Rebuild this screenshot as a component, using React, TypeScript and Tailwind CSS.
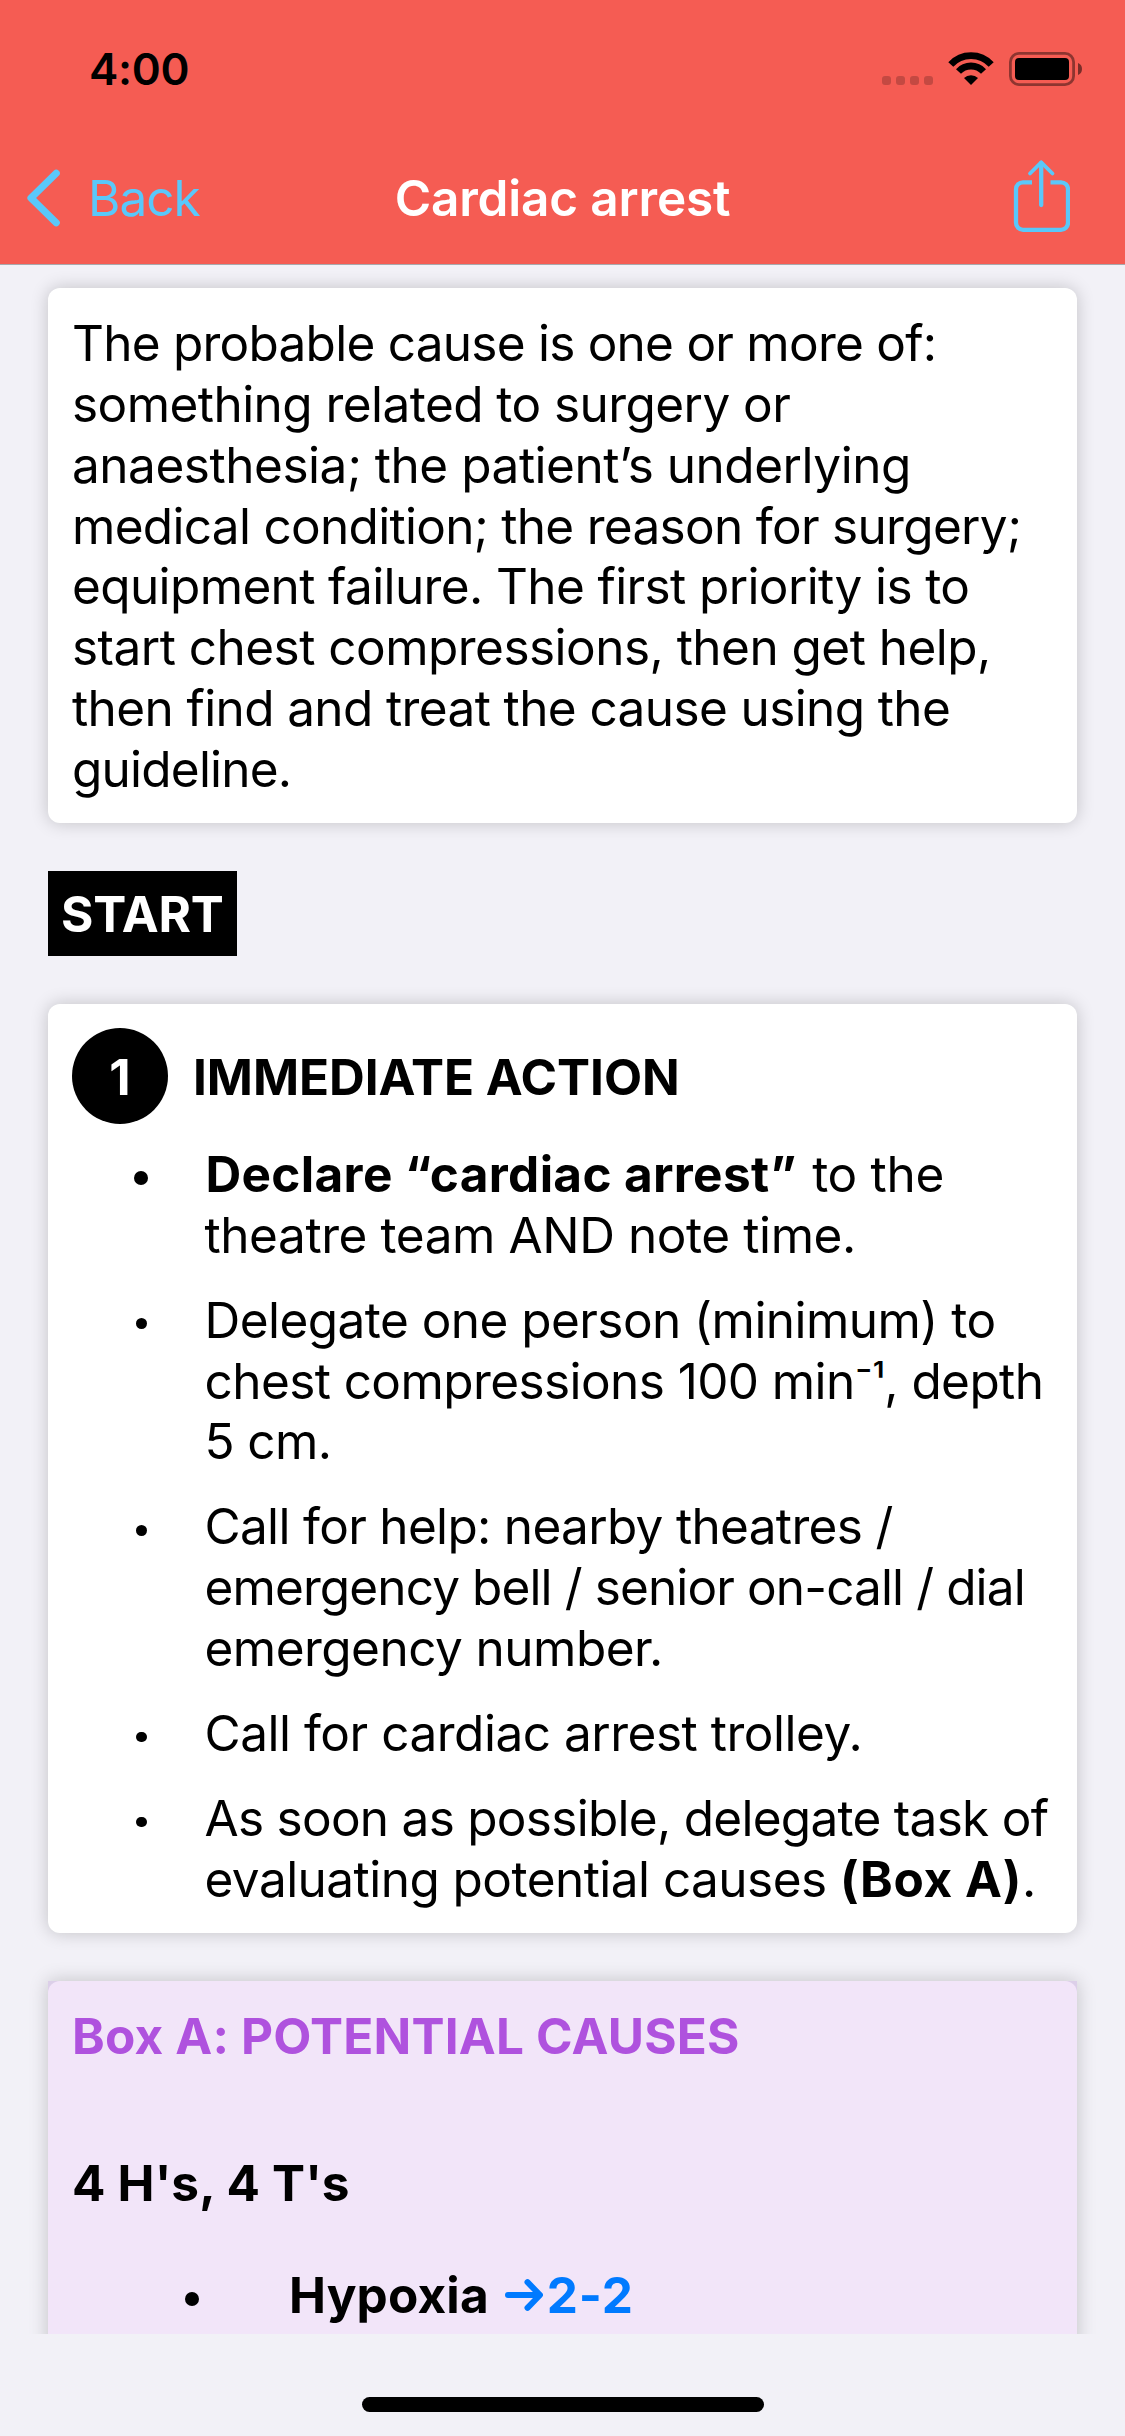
import type { ReactNode } from "react";

function WifiIcon() {
  return (
    <svg width="46" height="34" viewBox="0 0 46 34" fill="none">
      <path d="M2.8 12.5A27.4 27.4 0 0 1 43.2 12.5" stroke="#000" strokeWidth="6.8" />
      <path d="M10.5 19.5A17 17 0 0 1 35.5 19.5" stroke="#000" strokeWidth="6.8" />
      <path d="M23 33L16 26A10 10 0 0 1 30 26Z" fill="#000" />
    </svg>
  );
}

function BatteryIcon() {
  return (
    <svg width="74" height="34" viewBox="0 0 74 34" fill="none">
      <rect x="1.4" y="1.4" width="63.2" height="31.2" rx="8.6" stroke="#000" strokeOpacity="0.42" strokeWidth="2.8" />
      <rect x="6" y="6" width="54" height="22" rx="4" fill="#000" />
      <path d="M69 11C71.6 12 73 14.3 73 17C73 19.7 71.6 22 69 23Z" fill="#000" fillOpacity="0.5" />
    </svg>
  );
}

function ShareIcon() {
  return (
    <svg width="58" height="76" viewBox="0 0 58 76" fill="none" stroke="#5ac8fa" strokeWidth="4.3">
      <path d="M20 24.3H11A7 7 0 0 0 4 31.3V64.8A7 7 0 0 0 11 71.8H49A7 7 0 0 0 56 64.8V31.3A7 7 0 0 0 49 24.3H38.5" />
      <path d="M29.2 5V47" strokeLinecap="round" />
      <path d="M18 15.5L29.2 4.3L40.5 15.5" strokeLinecap="round" strokeLinejoin="round" strokeWidth="3.8" />
    </svg>
  );
}

function Line({ track, children }: { track: string; children: ReactNode }) {
  return <span className={`block whitespace-nowrap ${track}`}>{children}</span>;
}

function Bullet({ big, children }: { big?: boolean; children: ReactNode }) {
  return (
    <li className="flex">
      <span className="flex h-[61px] w-[132.5px] shrink-0 items-center pt-[7px] pl-16">
        <span className={big ? "ml-[-2px] size-3.5 rounded-full bg-black" : "size-[10.5px] rounded-full bg-black"} />
      </span>
      <div>{children}</div>
    </li>
  );
}

function Header() {
  return (
    <header className="h-[265px] border-b border-[#a9a8ad] bg-[#f55c53]">
      <div className="flex h-33 items-start justify-between pt-[47px] pr-[42px] pl-[89px]">
        <span className="text-[44px] leading-11 font-semibold tracking-[-0.25px]">4:00</span>
        <div className="flex gap-[15px] pt-[5px]">
          <div className="mt-6 flex gap-[5px]">
            <i className="size-[9px] rounded-[3px] bg-black/20" />
            <i className="size-[9px] rounded-[3px] bg-black/20" />
            <i className="size-[9px] rounded-[3px] bg-black/20" />
            <i className="size-[9px] rounded-[3px] bg-black/20" />
          </div>
          <WifiIcon />
          <BatteryIcon />
        </div>
      </div>
      <nav className="grid h-33 grid-cols-[1fr_auto_1fr] items-center">
        <div className="flex items-center gap-[28px] pl-[26px] text-[#5ac8fa]">
          <svg width="34" height="58" viewBox="0 0 34 58" fill="none">
            <path d="M30.2 4.2L5 29L30.2 53.8" stroke="#5ac8fa" strokeWidth="7.2" strokeLinecap="round" strokeLinejoin="round" />
          </svg>
          <span className="tracking-[-1px]">Back</span>
        </div>
        <h1 className="font-semibold tracking-[-0.17px] text-white">Cardiac arrest</h1>
        <div className="flex justify-end pr-[55px] pb-1">
          <ShareIcon />
        </div>
      </nav>
    </header>
  );
}

export default function App() {
  return (
    <div className="flex h-[2436px] w-[1125px] flex-col overflow-hidden bg-[#f2f1f7] font-['Inter',sans-serif] text-[49.5px] leading-[60.86px] text-black">
      <Header />
      <main className="h-[2069px] shrink-0 overflow-hidden px-12 pt-[23px]">
        <section className="h-[535px] rounded-xl bg-white px-6 pt-[25px] shadow-[0_0_18px_rgba(0,0,0,0.2)]">
          <p>
            <Line track="tracking-[-0.753px]">The probable cause is one or more of:</Line>
            <Line track="tracking-[-0.553px]">something related to surgery or</Line>
            <Line track="tracking-[-0.467px]">anaesthesia; the patient’s underlying</Line>
            <Line track="tracking-[-0.695px]">medical condition; the reason for surgery;</Line>
            <Line track="tracking-[-0.62px]">equipment failure. The first priority is to</Line>
            <Line track="tracking-[-0.525px]">start chest compressions, then get help,</Line>
            <Line track="tracking-[-0.61px]">then find and treat the cause using the</Line>
            <Line track="tracking-[-0.78px]">guideline.</Line>
          </p>
        </section>

        <div className="mt-12 flex h-[85px] w-[189px] items-center bg-black pt-px pl-[13px]">
          <span className="font-bold tracking-[-0.2px] text-white">START</span>
        </div>

        <section className="mt-12 h-[929px] rounded-xl bg-white p-6 shadow-[0_0_18px_rgba(0,0,0,0.2)]">
          <div className="flex items-center gap-[25px]">
            <span className="flex size-24 items-center justify-center rounded-full bg-black pt-0.5 font-bold text-white">1</span>
            <h2 className="pt-0.5 font-bold tracking-[-0.05px]">IMMEDIATE ACTION</h2>
          </div>
          <ul className="mt-5 flex flex-col gap-6">
            <Bullet big>
              <Line track="tracking-[-0.3px]">
                <b className="ml-px font-bold tracking-[0.32px]">Declare “cardiac arrest”</b>
                <span className="ml-0.5"> to the</span>
              </Line>
              <Line track="tracking-[-0.42px]">theatre team AND note time.</Line>
            </Bullet>
            <Bullet>
              <Line track="tracking-[-0.548px]">Delegate one person (minimum) to</Line>
              <Line track="tracking-[-0.58px]">
                chest compressions 100 min
                <span className="relative -top-[3px] text-[42px] leading-none">⁻¹</span>, depth
              </Line>
              <Line track="tracking-[-0.6px]">5 cm.</Line>
            </Bullet>
            <Bullet>
              <Line track="tracking-[-0.68px]">Call for help: nearby theatres /</Line>
              <Line track="tracking-[-0.88px]">emergency bell / senior on-call / dial</Line>
              <Line track="tracking-[-0.53px]">emergency number.</Line>
            </Bullet>
            <Bullet>
              <Line track="tracking-[-0.48px]">Call for cardiac arrest trolley.</Line>
            </Bullet>
            <Bullet>
              <Line track="tracking-[-0.72px]">As soon as possible, delegate task of</Line>
              <Line track="tracking-[-0.54px]">
                evaluating potential causes <b className="font-bold tracking-[0.6px]">(Box A)</b>.
              </Line>
            </Bullet>
          </ul>
        </section>

        <section className="mt-12 bg-[#dccfe9] shadow-[0_0_18px_rgba(0,0,0,0.2)]">
          <div className="h-[600px] rounded-xl bg-[#f2e5f9] px-6 pt-[25px]">
            <h2 className="font-bold tracking-[0.19px] text-[#af52de]">Box A: POTENTIAL CAUSES</h2>
            <h3 className="mt-[86px] font-bold tracking-[0.2px]">4 H's, 4 T's</h3>
            <div className="mt-[51px] flex items-center pl-[113px]">
              <span className="mt-[7px] size-3.5 rounded-full bg-black" />
              <span className="ml-[90px] font-bold tracking-[0.15px]">Hypoxia</span>
              <a className="ml-[16px] flex items-center font-bold tracking-[0.9px] text-[#007aff]">
                <svg width="38" height="32" viewBox="0 0 38 32" fill="none" stroke="#007aff" strokeWidth="6" strokeLinecap="round" strokeLinejoin="round">
                  <path d="M3 16H34" />
                  <path d="M22.5 3.2L35 16L22.5 28.8" />
                </svg>
                <span className="ml-1">2-2</span>
              </a>
            </div>
          </div>
        </section>
      </main>
      <footer className="flex flex-1 items-end justify-center pb-6">
        <div className="h-[15px] w-[402px] rounded-full bg-black" />
      </footer>
    </div>
  );
}
